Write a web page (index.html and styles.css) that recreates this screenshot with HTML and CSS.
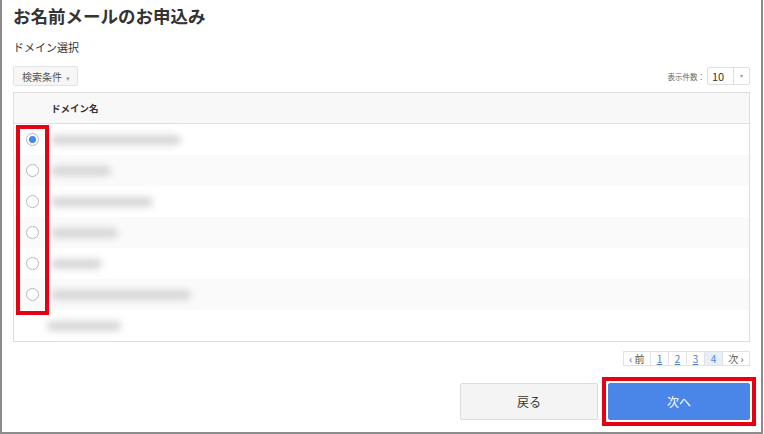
FILE: index.html
```html
<!DOCTYPE html>
<html lang="ja">
<head>
  <meta charset="UTF-8" /><meta name="viewport" content="width=device-width, initial-scale=1.0" />
  <title>お名前メールのお申込み</title>
  <link rel="stylesheet" href="styles.css">
</head>
<body>
  <div class="frame">
    <h1 class="page-title">お名前メールのお申込み</h1>
    <div class="section-label">ドメイン選択</div>

    <div class="toolbar">
      <button class="filter-btn">検索条件 <span class="caret">▾</span></button>
      <div class="per-page">
        <span class="per-page-label">表示件数：</span>
        <div class="select">
          <span class="select-value">10</span>
          <span class="select-arrow">▾</span>
        </div>
      </div>
    </div>

    <div class="domain-table">
      <div class="table-head">
        <div class="col-radio"></div>
        <div class="col-name">ドメイン名</div>
      </div>
      <div class="table-body">
        <label class="row"><span class="col-radio"><input type="radio" name="domain" checked></span><span class="col-name"><span class="blur" style="width:130px"></span></span></label>
        <label class="row"><span class="col-radio"><input type="radio" name="domain"></span><span class="col-name"><span class="blur" style="width:60px"></span></span></label>
        <label class="row"><span class="col-radio"><input type="radio" name="domain"></span><span class="col-name"><span class="blur" style="width:102px"></span></span></label>
        <label class="row"><span class="col-radio"><input type="radio" name="domain"></span><span class="col-name"><span class="blur" style="width:67px"></span></span></label>
        <label class="row"><span class="col-radio"><input type="radio" name="domain"></span><span class="col-name"><span class="blur" style="width:51px"></span></span></label>
        <label class="row"><span class="col-radio"><input type="radio" name="domain"></span><span class="col-name"><span class="blur" style="width:140px"></span></span></label>
        <label class="row"><span class="col-radio"></span><span class="col-name shift"><span class="blur" style="width:74px"></span></span></label>
        <div class="highlight"></div>
      </div>
    </div>

    <div class="pager">
      <span class="page-cell page-text">‹ 前</span>
      <a class="page-cell page-link" href="#">1</a>
      <a class="page-cell page-link" href="#">2</a>
      <a class="page-cell page-link" href="#">3</a>
      <span class="page-cell page-current">4</span>
      <span class="page-cell page-text">次 ›</span>
    </div>

    <div class="actions">
      <button class="btn btn-back">戻る</button>
      <div class="next-mark"><button class="btn btn-next">次へ</button></div>
    </div>
  </div>
</body>
</html>
```

FILE: styles.css
```css
body { margin: 0; background: #fff; font-family: "Noto Sans CJK JP", "Noto Sans", sans-serif; color: #333; }
.frame { width: 763px; height: 434px; box-sizing: border-box; border-left: 2px solid #8c8c8c; border-right: 2px solid #8c8c8c; border-bottom: 2px solid #8c8c8c; padding: 0 11px; display: flex; flex-direction: column; }

.page-title { margin: 0; padding-top: 4px; font-size: 17.5px; line-height: 24px; font-weight: 700; color: #333; }
.section-label { margin-top: 10px; font-size: 11px; line-height: 18px; color: #333; }

.toolbar { margin-top: 10px; height: 20px; display: flex; justify-content: space-between; align-items: center; }
.filter-btn { height: 20px; width: 65px; padding: 0 0 0 8px; text-align: left; background: #f6f6f6; border: 1px solid #e2e2e2; border-radius: 2px; font-family: inherit; font-size: 10px; color: #555; }
.filter-btn .caret { font-size: 7px; color: #999; margin-left: 2px; }
.per-page { display: flex; align-items: center; gap: 2px; }
.per-page-label { font-size: 7.5px; color: #666; }
.select { display: flex; height: 18px; width: 43px; border: 1px solid #e0e0e0; box-sizing: border-box; border-radius: 2px; }
.select-value { flex: 1; font-size: 11px; line-height: 16px; padding-left: 4px; color: #333; }
.select-arrow { width: 15px; border-left: 1px solid #e0e0e0; font-size: 6px; line-height: 16px; text-align: center; color: #999; }

.domain-table { margin-top: 6px; border: 1px solid #dedede; }
.table-head { display: flex; height: 30px; align-items: center; background: #f8f8f8; border-bottom: 1px solid #e0e0e0; font-size: 9.5px; font-weight: 700; color: #333; }
.col-radio { width: 37px; flex: none; display: flex; align-items: center; }
.col-name { flex: 1; display: flex; align-items: center; }
.col-name.shift { margin-left: -4px; }
.table-body { position: relative; }
.row { display: flex; height: 31px; align-items: center; }
.row:nth-child(even) { background: #fafafa; }
.row input { appearance: none; -webkit-appearance: none; margin: 0 0 0 12px; width: 13px; height: 13px; border: 1px solid #b8b8b8; border-radius: 50%; background: #fff; display: grid; place-content: center; }
.row input:checked { border-color: #9cbbe8; }
.row input:checked::after { content: ""; width: 7px; height: 7px; border-radius: 50%; background: #4a86e8; }
.blur { display: inline-block; height: 10px; background: #d6d6d6; border-radius: 5px; filter: blur(3.5px); }
.highlight { position: absolute; left: 2px; top: 1px; width: 33px; height: 190px; box-sizing: border-box; border: 4px solid #e60012; }

.pager { margin-top: 9px; align-self: flex-end; display: flex; height: 15px; border: 1px solid #e2e2e2; box-sizing: border-box; }
.page-cell { display: flex; align-items: center; justify-content: center; font-size: 10px; border-left: 1px solid #e2e2e2; text-decoration: none; }
.page-cell:first-child { border-left: none; }
.page-text { width: 26px; color: #555; }
.page-link { width: 17px; color: #4a7fd0; text-decoration: underline; }
.page-current { width: 17px; color: #4a86e8; background: #e8effa; }

.actions { margin-top: 11px; display: flex; justify-content: flex-end; align-items: center; gap: 4px; margin-right: -6px; }
.btn { height: 37px; border-radius: 2px; font-family: inherit; font-size: 12px; cursor: pointer; }
.btn-back { width: 138px; background: #f4f4f4; border: 1px solid #dcdcdc; color: #333; }
.next-mark { border: 4px solid #e60012; padding: 2px; display: flex; }
.btn-next { width: 142px; background: #4a86e8; border: 1px solid #4a86e8; color: #fff; }
```
